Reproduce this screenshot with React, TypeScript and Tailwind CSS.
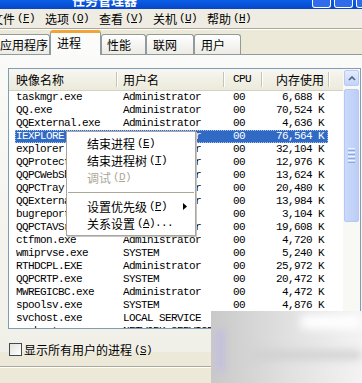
import React from 'react';

const zh = "font-['Noto_Sans_CJK_SC',sans-serif] text-[12px] tracking-normal";
const mono = "font-['Liberation_Mono',monospace] text-[11px] tracking-[-0.6px]";

type Row = { name: string; user: string; mem: string; selected?: boolean };

const rows: Row[] = [
  { name: 'taskmgr.exe', user: 'Administrator', mem: '6,688 K' },
  { name: 'QQ.exe', user: 'Administrator', mem: '70,524 K' },
  { name: 'QQExternal.exe', user: 'Administrator', mem: '4,636 K' },
  { name: 'IEXPLORE.EXE', user: 'Administrator', mem: '76,564 K', selected: true },
  { name: 'explorer.exe', user: 'Administrator', mem: '32,104 K' },
  { name: 'QQProtect.exe', user: 'Administrator', mem: '12,976 K' },
  { name: 'QQPCWebShield.exe', user: 'Administrator', mem: '13,624 K' },
  { name: 'QQPCTray.exe', user: 'Administrator', mem: '20,480 K' },
  { name: 'QQExternal.exe', user: 'Administrator', mem: '13,984 K' },
  { name: 'bugreport.exe', user: 'SYSTEM', mem: '3,104 K' },
  { name: 'QQPCTAVSrv.exe', user: 'Administrator', mem: '19,608 K' },
  { name: 'ctfmon.exe', user: 'Administrator', mem: '4,720 K' },
  { name: 'wmiprvse.exe', user: 'SYSTEM', mem: '5,240 K' },
  { name: 'RTHDCPL.EXE', user: 'Administrator', mem: '25,972 K' },
  { name: 'QQPCRTP.exe', user: 'SYSTEM', mem: '20,472 K' },
  { name: 'MWREGICBC.exe', user: 'Administrator', mem: '4,472 K' },
  { name: 'spoolsv.exe', user: 'SYSTEM', mem: '4,876 K' },
  { name: 'svchost.exe', user: 'LOCAL SERVICE', mem: '3,620 K' },
  { name: 'svchost.exe', user: 'NETWORK SERVICE', mem: '5,112 K' },
];

function Mnemonic({ label, hotkey, tail }: { label: string; hotkey: string; tail?: string }) {
  return (
    <span className="inline-flex items-center whitespace-nowrap">
      <span className={zh}>{label}</span>
      <span className={`${mono} ml-[2px]`}>
        (<span className="underline underline-offset-1">{hotkey}</span>){tail}
      </span>
    </span>
  );
}

function Tab({ label, width, active, pad }: { label: string; width: string; active?: boolean; pad: string }) {
  if (active) {
    return (
      <div className={`${width} ${pad} relative z-10 -mb-[1px] flex h-[25px] items-center rounded-t-[3px] border border-b-0 border-[#919b9c] border-t-[3px] border-t-[#f0a43a] bg-[#fbfbf9] pb-[3px]`}>
        <span className={zh}>{label}</span>
      </div>
    );
  }
  return (
    <div className={`${width} ${pad} flex h-[20px] items-center rounded-t-[3px] border border-b-0 border-[#919b9c] bg-gradient-to-b from-white to-[#ecebe5] pt-[1px]`}>
      <span className={zh}>{label}</span>
    </div>
  );
}

function MenuItem({ children, disabled, arrow }: { children: React.ReactNode; disabled?: boolean; arrow?: boolean }) {
  return (
    <div className={`flex h-[17px] items-center pl-[20px] pr-[8px] ${disabled ? 'text-[#aca899]' : 'text-black'}`}>
      {children}
      {arrow && (
        <svg className="ml-auto" width="4" height="7" viewBox="0 0 4 7">
          <path d="M0 0 L4 3.5 L0 7 Z" fill="#000" />
        </svg>
      )}
    </div>
  );
}

export default function App() {
  return (
    <div className="relative h-[383px] w-[362px] overflow-hidden bg-[#ece9d8] text-black">
      {/* title bar, mostly scrolled off */}
      <div className="flex h-[9px] items-end justify-between overflow-hidden bg-gradient-to-b from-[#0a5fe8] to-[#0846c6]">
        <span className="mb-[2px] ml-[72px] font-['Noto_Sans_CJK_SC',sans-serif] text-[13px] font-bold leading-[15px] text-white">
          任务管理器
        </span>
        <div className="-mr-[13px] flex gap-[3px] self-start">
          <div className="h-[8px] w-[19px] rounded-b-[3px] border border-t-0 border-white bg-[#2f6bea]" />
          <div className="h-[8px] w-[19px] rounded-b-[3px] border border-t-0 border-white bg-[#2f6bea]" />
          <div className="h-[8px] w-[19px] rounded-b-[3px] border border-t-0 border-white bg-[#2f6bea]" />
        </div>
      </div>

      {/* menu bar */}
      <div className="flex h-[19px] items-center bg-[#efede3] pb-[2px]">
        <div className="-ml-[9px] flex">
          <div className="w-[54px]"><Mnemonic label="文件" hotkey="F" /></div>
          <div className="w-[54px]"><Mnemonic label="选项" hotkey="O" /></div>
          <div className="w-[54px]"><Mnemonic label="查看" hotkey="V" /></div>
          <div className="w-[54px]"><Mnemonic label="关机" hotkey="U" /></div>
          <div className="w-[54px]"><Mnemonic label="帮助" hotkey="H" /></div>
        </div>
      </div>
      <div className="h-[2px] border-t border-b border-t-[#aca899] border-b-white" />

      {/* tabs */}
      <div className="flex h-[24px] items-end">
        <div className="-ml-[6px] flex items-end">
          <Tab label="应用程序" width="w-[56px]" pad="pl-[5px]" />
          <Tab label="进程" width="w-[51px]" pad="pl-[6px]" active />
          <Tab label="性能" width="w-[45px]" pad="pl-[5px]" />
          <Tab label="联网" width="w-[48px]" pad="pl-[6px]" />
          <Tab label="用户" width="w-[47px]" pad="pl-[6px]" />
        </div>
      </div>

      {/* tab page */}
      <div className="h-[298px] border-t border-[#919b9c] bg-gradient-to-b from-[#fafaf8] to-[#f0efe8]">
        <div className="ml-[8px] mt-[13px] flex h-[261px] w-[353px] overflow-hidden border border-[#7f9db9] bg-white">
          <div className="flex w-[334px] flex-col">
            {/* header */}
            <div className={`${zh} flex h-[22px] shrink-0 items-center border-b border-[#d6d2c2] bg-gradient-to-b from-[#f7f6f1] to-[#ebeadb]`}>
              <div className="flex h-full w-[107px] items-center pl-[7px]">映像名称</div>
              <div className="h-[15px] w-[2px] border-l border-r border-l-[#c7c5b2] border-r-white" />
              <div className="flex h-full w-[105px] items-center pl-[5px]">用户名</div>
              <div className="h-[15px] w-[2px] border-l border-r border-l-[#c7c5b2] border-r-white" />
              <div className={`${mono} flex h-full w-[36px] items-center pl-[8px]`}>CPU</div>
              <div className="h-[15px] w-[2px] border-l border-r border-l-[#c7c5b2] border-r-white" />
              <div className="flex h-full w-[65px] items-center justify-end pr-[4px]">内存使用</div>
              <div className="h-[15px] w-[2px] border-l border-r border-l-[#c7c5b2] border-r-white" />
            </div>
            {/* rows */}
            {rows.map((r, i) => (
              <div key={i} className={`${mono} flex h-[13px] shrink-0 pl-[6px] leading-[13px]`}>
                <div
                  className={`flex w-[313px] ${
                    r.selected ? 'bg-[#316ac5] text-white outline-1 -outline-offset-1 outline-dotted outline-[#a9c0ea]' : ''
                  }`}
                >
                  <div className="w-[101px] overflow-hidden whitespace-nowrap pl-[1px]">{r.name}</div>
                  <div className="w-[107px] overflow-hidden whitespace-nowrap pl-[7px]">{r.user}</div>
                  <div className="w-[38px] pl-[10px]">00</div>
                  <div className="w-[67px] whitespace-pre pr-[4px] text-right">{r.mem}</div>
                </div>
              </div>
            ))}
          </div>
          {/* scrollbar */}
          <div className="flex w-[17px] flex-col bg-[#f8f8f4] pr-[1px]">
            <div className="ml-[1px] mt-[1px] flex h-[16px] items-center justify-center rounded-[2px] border border-[#b8c9f2] bg-gradient-to-b from-[#e4ecfd] to-[#c3d3f9]">
              <svg width="8" height="5" viewBox="0 0 8 5">
                <path d="M1 4 L4 1 L7 4" stroke="#4d6185" strokeWidth="1.6" fill="none" />
              </svg>
            </div>
            <div className="ml-[1px] mt-[3px] flex h-[133px] flex-col items-center justify-center gap-[1px] rounded-[2px] border border-[#b6c8f4] bg-gradient-to-r from-[#cbd9fb] to-[#bccdf6]">
              <div className="h-[1px] w-[7px] bg-[#eef3fe]" />
              <div className="h-[1px] w-[7px] bg-[#8ea6e2]" />
              <div className="h-[1px] w-[7px] bg-[#eef3fe]" />
              <div className="h-[1px] w-[7px] bg-[#8ea6e2]" />
              <div className="h-[1px] w-[7px] bg-[#eef3fe]" />
              <div className="h-[1px] w-[7px] bg-[#8ea6e2]" />
              <div className="h-[1px] w-[7px] bg-[#eef3fe]" />
              <div className="h-[1px] w-[7px] bg-[#8ea6e2]" />
            </div>
          </div>
        </div>

        {/* checkbox */}
        <div className="ml-[9px] mt-[8px] flex items-center">
          <div className="h-[13px] w-[13px] border border-[#3e4a58] bg-gradient-to-br from-[#e4e3dc] to-white" />
          <span className="ml-[2px]"><Mnemonic label="显示所有用户的进程" hotkey="S" /></span>
        </div>
      </div>

      {/* window bottom */}
      <div className="mt-[14px] h-[2px] border-t border-b border-t-[#aca899] border-b-white" />

      {/* context menu over the selected row */}
      <div className="absolute left-[66px] top-[131px] w-[130px] border border-[#a7a6a0] bg-white py-[3px] shadow-[1px_1px_0_#c8c6bd]">
        <MenuItem><Mnemonic label="结束进程" hotkey="E" /></MenuItem>
        <MenuItem><Mnemonic label="结束进程树" hotkey="T" /></MenuItem>
        <MenuItem disabled><Mnemonic label="调试" hotkey="D" /></MenuItem>
        <div className="flex h-[12px] items-center px-[1px]">
          <div className="h-[1px] w-full bg-[#aca899]" />
        </div>
        <MenuItem arrow><Mnemonic label="设置优先级" hotkey="P" /></MenuItem>
        <MenuItem><Mnemonic label="关系设置" hotkey="A" tail="..." /></MenuItem>
      </div>

      {/* blurred watermark patch in the corner */}
      <div className="absolute left-[211px] top-[311px] h-[72px] w-[151px] overflow-hidden bg-gradient-to-r from-[#c9c9c9] via-[#e0e0e0] to-[#f3f3f3]">
        <div className="absolute left-[5px] top-[18px] h-[42px] w-[9px] bg-[#c3c0dc] blur-[3px]" />
        <div className="absolute left-[40px] top-[40px] h-[8px] w-[110px] bg-[#cfcfcf] blur-[4px]" />
        <div className="absolute left-[90px] top-[4px] h-[14px] w-[60px] bg-white blur-[5px]" />
      </div>
    </div>
  );
}
